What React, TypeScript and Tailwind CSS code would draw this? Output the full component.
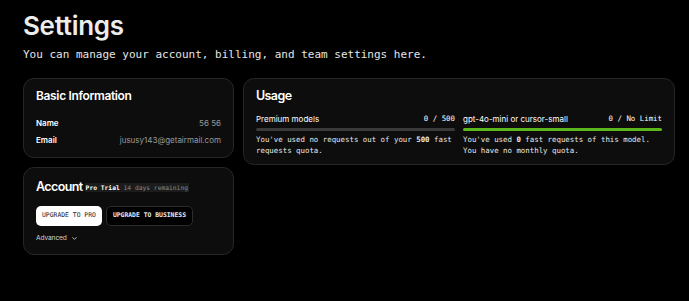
import React from "react";

const mono = { fontFamily: '"DejaVu Sans Mono", "Liberation Mono", monospace' };
const sans = { fontFamily: 'Inter, "Noto Sans", sans-serif' };

function Chevron() {
  return (
    <svg width="7" height="7" viewBox="0 0 24 24" fill="none" stroke="#cfcfcf" strokeWidth="3" strokeLinecap="round" strokeLinejoin="round">
      <path d="m6 9 6 6 6-6" />
    </svg>
  );
}

export default function App() {
  return (
    <div className="w-[689px] h-[301px] bg-black text-white overflow-hidden pl-[23px] pt-[10px]" style={sans}>
      <h1 className="text-[26px] leading-[32px] font-semibold tracking-[-0.3px] text-[#ececec]">Settings</h1>
      <p className="mt-[6px] text-[11px] leading-[14px] text-[#e6e6e6]" style={mono}>
        You can manage your account, billing, and team settings here.
      </p>
      <div className="mt-[16px] flex gap-[9px] items-start">
        <div className="w-[211px] flex flex-col gap-[9px]">
          <div className="h-[80px] rounded-[11px] border border-[#262626] bg-[#0d0d0d] px-[12px] pt-[9px]">
            <div className="text-[12px] leading-[16px] font-semibold text-white tracking-[-0.35px]">Basic Information</div>
            <div className="mt-[13px] flex justify-between text-[8px] leading-[12px]">
              <span className="font-semibold text-white">Name</span>
              <span className="text-[#9a9a9a]">56 56</span>
            </div>
            <div className="mt-[5px] flex justify-between text-[8px] leading-[12px]">
              <span className="font-semibold text-white">Email</span>
              <span className="text-[#9a9a9a]">jususy143@getairmail.com</span>
            </div>
          </div>
          <div className="h-[88px] rounded-[11px] border border-[#262626] bg-[#0d0d0d] px-[12px] pt-[11px]">
            <div className="flex items-center gap-[2px] h-[16px]">
              <span className="text-[12.5px] leading-[16px] font-semibold text-white tracking-[-0.6px]">Account</span>
              <span className="bg-[#1c1c1c] px-[1px] text-[6.3px] leading-[9px]" style={mono}>
                <span className="font-bold text-white">Pro Trial</span>
                <span className="text-[#8a8a8a]"> 14 days remaining</span>
              </span>
            </div>
            <div className="mt-[11px] flex gap-[4px]">
              <div className="h-[20px] px-[6px] rounded-[5px] bg-white text-[#1a1a2e] text-[6.4px] flex items-center" style={mono}>UPGRADE TO PRO</div>
              <div className="h-[20px] px-[6px] rounded-[5px] bg-black border border-[#2c2c2c] text-[#e8eaf6] font-bold text-[6.4px] flex items-center" style={mono}>UPGRADE TO BUSINESS</div>
            </div>
            <div className="mt-[7px] flex items-center gap-[4px] text-[6.6px] leading-[11px] tracking-[-0.1px] text-[#d6d6d6]">
              <span>Advanced</span>
              <Chevron />
            </div>
          </div>
        </div>
        <div className="w-[432px] h-[87px] rounded-[11px] border border-[#262626] bg-[#0d0d0d] px-[12px] pt-[9px]">
          <div className="text-[12.5px] leading-[16px] font-semibold text-white tracking-[-0.6px]">Usage</div>
          <div className="mt-[9px] grid grid-cols-2 gap-[8px]">
            <div>
              <div className="flex justify-between items-center h-[12px]">
                <span className="text-[8px] text-white">Premium models</span>
                <span className="text-[7.4px] text-white" style={mono}>0 / 500</span>
              </div>
              <div className="mt-[3px] h-[3px] rounded-full bg-[#3a3a3a]" />
              <div className="mt-[3px] text-[7.4px] leading-[11px] text-[#e8e8e8]" style={mono}>
                You've used no requests out of your <span className="font-bold">500</span> fast<br />requests quota.
              </div>
            </div>
            <div>
              <div className="flex justify-between items-center h-[12px]">
                <span className="text-[8px] text-white">gpt-4o-mini or cursor-small</span>
                <span className="text-[7.4px] text-white" style={mono}>0 / No Limit</span>
              </div>
              <div className="mt-[3px] h-[3px] rounded-full bg-[#5cb71c]" />
              <div className="mt-[3px] text-[7.4px] leading-[11px] text-[#e8e8e8]" style={mono}>
                You've used <span className="font-bold">0</span> fast requests of this model.<br />You have no monthly quota.
              </div>
            </div>
          </div>
        </div>
      </div>
    </div>
  );
}
